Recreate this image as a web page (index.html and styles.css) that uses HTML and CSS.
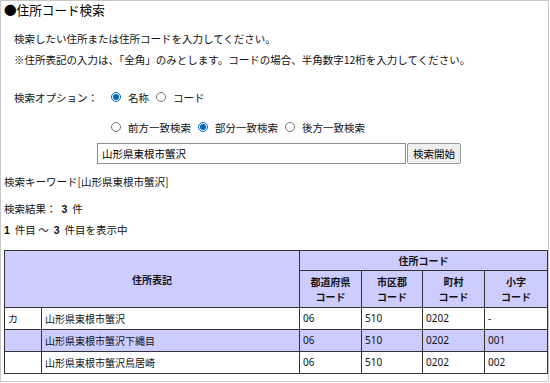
FILE: index.html
```html
<!DOCTYPE html>
<html lang="ja">
<head>
<meta charset="utf-8">
<title>住所コード検索</title>
<link rel="stylesheet" href="styles.css">
</head>
<body>
<div class="frame">
  <h1 class="title">●住所コード検索</h1>
  <p class="note note-first">検索したい住所または住所コードを入力してください。</p>
  <p class="note">※住所表記の入力は、「全角」のみとします。コードの場合、半角数字12桁を入力してください。</p>

  <div class="opt-row opt-row-first">
    <span class="opt-label">検索オプション：</span>
    <label class="radio"><input type="radio" name="kind" checked><span>名称</span></label>
    <label class="radio"><input type="radio" name="kind"><span>コード</span></label>
  </div>
  <div class="opt-row opt-row-second">
    <span class="opt-label"></span>
    <label class="radio"><input type="radio" name="match"><span>前方一致検索</span></label>
    <label class="radio"><input type="radio" name="match" checked><span>部分一致検索</span></label>
    <label class="radio"><input type="radio" name="match"><span>後方一致検索</span></label>
  </div>
  <div class="search-row">
    <input class="search-input" type="text" value="山形県東根市蟹沢">
    <button class="search-btn" type="button">検索開始</button>
  </div>

  <p class="info info-keyword">検索キーワード[山形県東根市蟹沢]</p>
  <p class="info info-result">検索結果：<b class="num">3</b>件</p>
  <p class="info info-range"><b class="num num-first">1</b>件目 ～<b class="num">3</b>件目を表示中</p>

  <table class="result">
    <colgroup>
      <col class="c1"><col class="c2"><col class="c3"><col class="c4"><col class="c5"><col class="c6">
    </colgroup>
    <thead>
      <tr class="h1">
        <th colspan="2" rowspan="2">住所表記</th>
        <th colspan="4">住所コード</th>
      </tr>
      <tr class="h2">
        <th>都道府県<br>コード</th>
        <th>市区郡<br>コード</th>
        <th>町村<br>コード</th>
        <th>小字<br>コード</th>
      </tr>
    </thead>
    <tbody>
      <tr class="r1"><td>カ</td><td>山形県東根市蟹沢</td><td>06</td><td>510</td><td>0202</td><td>-</td></tr>
      <tr class="r2 alt"><td></td><td>山形県東根市蟹沢下縄目</td><td>06</td><td>510</td><td>0202</td><td>001</td></tr>
      <tr class="r3"><td></td><td>山形県東根市蟹沢鳥居崎</td><td>06</td><td>510</td><td>0202</td><td>002</td></tr>
    </tbody>
  </table>
</div>
</body>
</html>
```

FILE: styles.css
```css
html, body {
  margin: 0;
  padding: 0;
  background: #fff;
}
body {
  font-family: "Noto Sans CJK JP", "Noto Sans", sans-serif;
  font-size: 10.5px;
  color: #111;
}
.frame {
  box-sizing: border-box;
  width: 549px;
  height: 382px;
  border: 1px solid #c8c8c8;
  padding: 0 2px 0 3px;
  overflow: hidden;
}
.title {
  margin: 0;
  font-size: 12.6px;
  font-weight: normal;
  line-height: 17px;
  color: #000;
}
.note {
  margin: 5px 0 0 10px;
  line-height: 16px;
}
.note-first {
  margin-top: 13px;
}
.opt-row {
  display: flex;
  align-items: center;
  height: 16px;
  margin-left: 10px;
}
.opt-row-first {
  margin-top: 21px;
}
.opt-row-second {
  margin-top: 14px;
}
.opt-label {
  width: 96px;
  flex: none;
}
.radio {
  display: flex;
  align-items: center;
  margin-right: 6px;
}
.radio input {
  width: 10px;
  height: 10px;
  margin: 0 7px 0 1px;
  accent-color: #0067c0;
}
.search-row {
  display: flex;
  margin: 8px 0 0 93px;
  height: 21px;
}
.search-input {
  box-sizing: border-box;
  width: 309px;
  height: 21px;
  margin: 0;
  padding: 0 4px;
  border: 1px solid #8f8f8f;
  font-family: inherit;
  font-size: 10.5px;
  color: #000;
}
.search-btn {
  box-sizing: border-box;
  width: 54px;
  height: 21px;
  margin: 0 0 0 1px;
  padding: 0;
  border: 1px solid #9a9a9a;
  border-radius: 2px;
  background: #efefef;
  font-family: inherit;
  font-size: 10.5px;
  color: #000;
}
.info {
  margin: 0;
  line-height: 16px;
}
.num {
  font-family: "Liberation Sans", sans-serif;
  font-weight: bold;
  margin: 0 5px;
}
.num-first {
  margin-left: 0;
}
.info-keyword {
  margin-top: 10px;
}
.info-result {
  margin-top: 11px;
}
.info-range {
  margin-top: 5px;
}
.result {
  margin-top: 12px;
  border-collapse: collapse;
  width: 543px;
  table-layout: fixed;
  font-size: 10px;
  border: 1px solid #333;
}
.result .c1 { width: 37px; }
.result .c2 { width: 258px; }
.result .c3 { width: 62px; }
.result .c4 { width: 61px; }
.result .c5 { width: 62px; }
.result .c6 { width: 63px; }
.result th, .result td {
  border: 1px solid #333;
  padding: 0 3px;
}
.result th {
  background: #ccccff;
  font-weight: bold;
  text-align: center;
  line-height: 15px;
  color: #111;
}
.result .h1 th {
  height: 19px;
}
.result .h2 th {
  height: 36px;
}
.result td {
  height: 21px;
  line-height: 15px;
  text-align: left;
  color: #111;
}
.result td:nth-child(n+3) {
  font-family: "Noto Sans", sans-serif;
}
.result .alt td {
  background: #ccccff;
}
```
